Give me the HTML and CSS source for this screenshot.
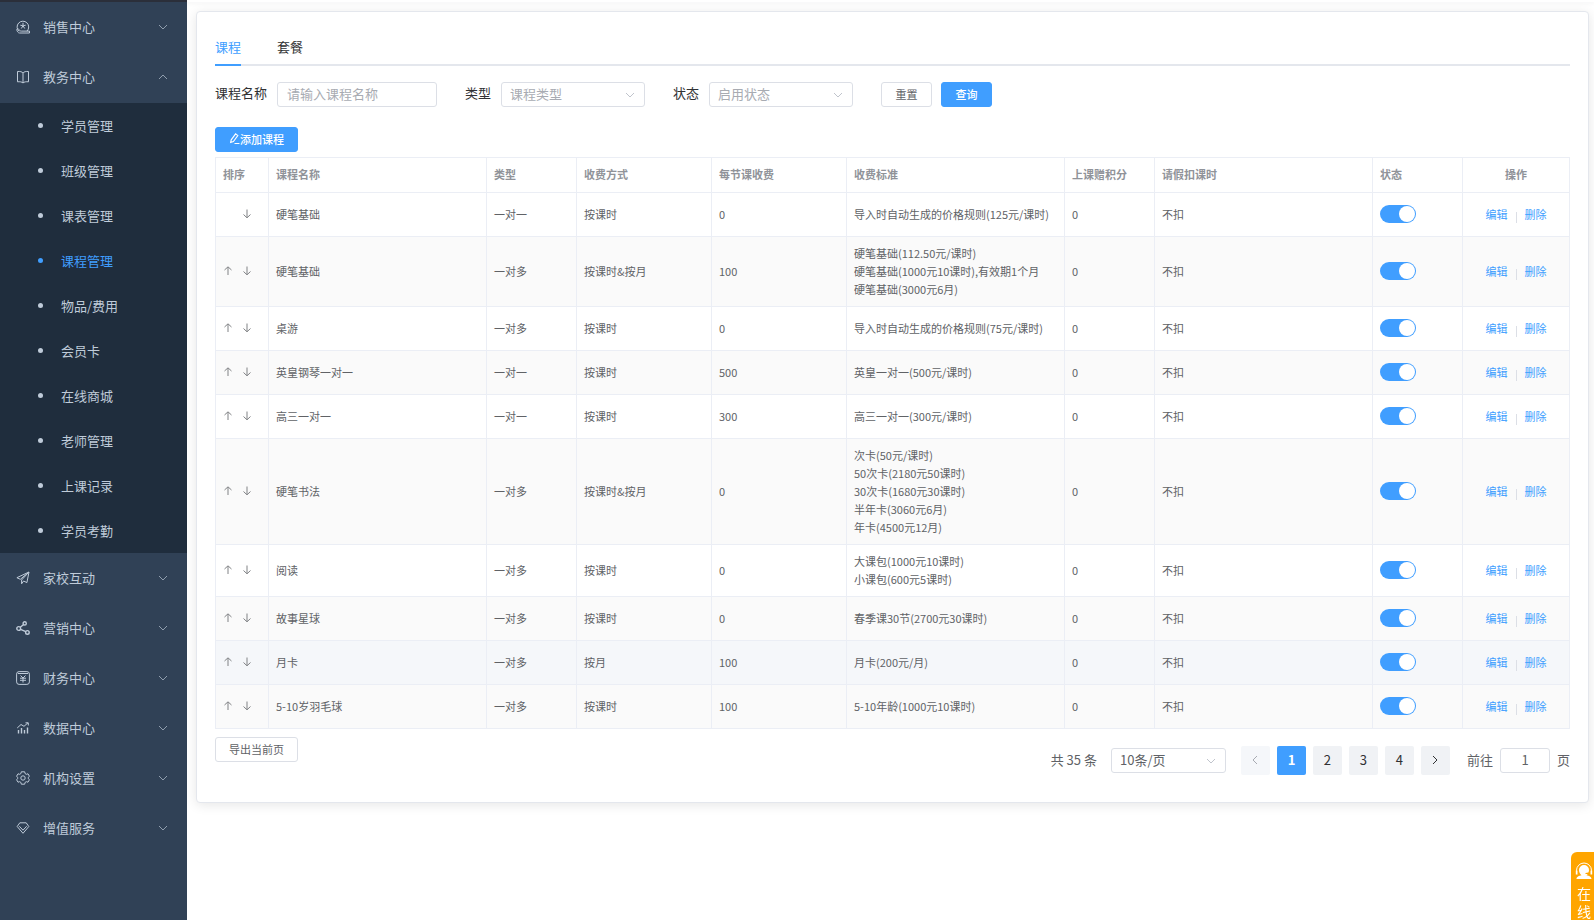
FILE: index.html
```html
<!DOCTYPE html>
<html lang="zh-CN">
<head>
<meta charset="utf-8">
<title>课程管理</title>
<link rel="stylesheet" href="styles.css">
</head>
<body>
<svg class="sprite" aria-hidden="true">
  <symbol id="i-down" viewBox="0 0 12 12"><path d="M2 4l4 4 4-4"/></symbol>
  <symbol id="i-up" viewBox="0 0 12 12"><path d="M2 8l4-4 4 4"/></symbol>
  <symbol id="i-arrow-up" viewBox="0 0 10 10"><path d="M5 9V1M1.500 4L5 .8 8.500 4"/></symbol>
  <symbol id="i-arrow-down" viewBox="0 0 10 10"><path d="M5 .5v8M1.500 5.500L5 8.800l3.500-3.300"/></symbol>
</svg>
<div class="app">
  <aside class="sidebar">
    <nav class="nav">
      <button class="nav-item" type="button">
        <svg class="nav-icon" viewBox="0 0 14 14"><path d="M3 11.300a5.800 5.800 0 1 1 8-.2"/><path d="M7 2.800v2.400M4.300 5.200l2.700.6 2.700-.6M5.300 8.500L7 5.800l1.700 2.700M.8 9.500c.2-1 1.500-1.200 2-.2s1.200 1.800 2.500 1.800h8.200v1.900H3.500c-1.500 0-2.700-2-2.700-3.500z"/></svg>
        <span>销售中心</span><svg class="nav-caret"><use href="#i-down"/></svg>
      </button>
      <button class="nav-item" type="button" aria-expanded="true">
        <svg class="nav-icon" viewBox="0 0 14 14"><path d="M7 3C6.200 1.800 4 1.200 1.500 1.500v10.300c2.300-.2 4.500 0 5.500 1.200 1-1.200 3.200-1.400 5.500-1.200V1.500C10 1.200 7.800 1.800 7 3zM7 3v10"/></svg>
        <span>教务中心</span><svg class="nav-caret"><use href="#i-up"/></svg>
      </button>
      <ul class="subnav">
        <li><a href="#">学员管理</a></li>
        <li><a href="#">班级管理</a></li>
        <li><a href="#">课表管理</a></li>
        <li><a href="#" class="is-active">课程管理</a></li>
        <li><a href="#">物品/费用</a></li>
        <li><a href="#">会员卡</a></li>
        <li><a href="#">在线商城</a></li>
        <li><a href="#">老师管理</a></li>
        <li><a href="#">上课记录</a></li>
        <li><a href="#">学员考勤</a></li>
      </ul>
      <button class="nav-item" type="button">
        <svg class="nav-icon" viewBox="0 0 14 14"><path d="M13 1L.9 6.700l3.400 1.600L13 1l-7.400 8v3.800l2-2.800 3.300 1.600L13 1z"/></svg>
        <span>家校互动</span><svg class="nav-caret"><use href="#i-down"/></svg>
      </button>
      <button class="nav-item" type="button">
        <svg class="nav-icon bold" viewBox="0 0 14 14"><circle cx="2.700" cy="7.500" r="1.900"/><circle cx="8.700" cy="2.400" r="1.600"/><circle cx="11.400" cy="11.400" r="1.800"/><path d="M4.300 6.300l3.300-2.800M4.600 8.300l5.200 2.400"/></svg>
        <span>营销中心</span><svg class="nav-caret"><use href="#i-down"/></svg>
      </button>
      <button class="nav-item" type="button">
        <svg class="nav-icon" viewBox="0 0 14 14"><rect x=".6" y=".6" width="12.800" height="12.800" rx="2.500"/><path d="M2 2.500h10M4.500 4.500L7 7l2.500-2.500M4 7.200h6M4 9.300h6M7 7v4.500"/></svg>
        <span>财务中心</span><svg class="nav-caret"><use href="#i-down"/></svg>
      </button>
      <button class="nav-item" type="button">
        <svg class="nav-icon" viewBox="0 0 14 14"><path class="bold" d="M2.500 12.500V9M5.500 12.500V7M8.500 12.500V9M11.500 12.500V6.500"/><path d="M1.200 7L5 3.500l3 1.800 4-3.500M9.500 1.800h2.800v2.700"/></svg>
        <span>数据中心</span><svg class="nav-caret"><use href="#i-down"/></svg>
      </button>
      <button class="nav-item" type="button">
        <svg class="nav-icon" viewBox="0 0 14 14"><circle cx="7" cy="7" r="2.200"/><path d="M5.300.8L8.700.8 9.100 2.600 10.300 3.300 12 2.800 13.400 5.200 12.400 6.300 12.400 7.700 13.400 8.800 12 11.200 10.300 10.700 9.100 11.400 8.700 13.200 5.300 13.200 4.900 11.400 3.700 10.700 2 11.200.6 8.800 1.600 7.700 1.600 6.300.6 5.200 2 2.800 3.700 3.300 4.900 2.600z"/></svg>
        <span>机构设置</span><svg class="nav-caret"><use href="#i-down"/></svg>
      </button>
      <button class="nav-item" type="button">
        <svg class="nav-icon" viewBox="0 0 14 14"><path d="M3.800 1.800h6.400L12.800 5.500 7 12.300 1.200 5.500zM3.300 5.200L7 9.200l3.700-4"/></svg>
        <span>增值服务</span><svg class="nav-caret"><use href="#i-down"/></svg>
      </button>
    </nav>
  </aside>

  <main class="main">
    <div class="topbar"></div>
    <section class="card">
      <div class="tabs" role="tablist">
        <button class="tab is-active" type="button" role="tab" aria-selected="true">课程</button>
        <button class="tab" type="button" role="tab" aria-selected="false">套餐</button>
      </div>

      <form class="filters">
        <div class="field"><label for="name">课程名称</label><input id="name" class="input name-input" type="text" placeholder="请输入课程名称"></div>
        <div class="field"><label for="type">类型</label>
          <span class="select"><select id="type" class="input is-empty"><option>课程类型</option></select><svg><use href="#i-down"/></svg></span></div>
        <div class="field"><label for="status">状态</label>
          <span class="select"><select id="status" class="input is-empty"><option>启用状态</option></select><svg><use href="#i-down"/></svg></span></div>
        <div class="actions"><button class="btn" type="reset">重置</button><button class="btn primary" type="button">查询</button></div>
      </form>

      <button class="btn primary add" type="button"><svg viewBox="0 0 10 10"><path d="M1.500 8.500L2 6.200 6 .8l2 1.500-4 5.400zM5 9.500h4.500"/></svg>添加课程</button>

      <table class="table">
        <colgroup><col class="w-sort"><col><col class="w-s"><col class="w-m"><col class="w-m"><col><col class="w-s"><col><col class="w-s"><col class="w-op"></colgroup>
        <thead><tr><th>排序</th><th>课程名称</th><th>类型</th><th>收费方式</th><th>每节课收费</th><th>收费标准</th><th>上课赠积分</th><th>请假扣课时</th><th>状态</th><th class="center">操作</th></tr></thead>
        <tbody id="rows"></tbody>
      </table>

      <div class="footer">
        <button class="btn export" type="button">导出当前页</button>
        <div class="pagination">
          <span class="total">共 35 条</span>
          <span class="select size"><select class="input" aria-label="每页条数"><option>10条/页</option></select><svg><use href="#i-down"/></svg></span>
          <div class="pager">
            <button class="page" type="button" disabled aria-label="上一页"><svg viewBox="0 0 12 12"><path d="M8 2L4 6l4 4"/></svg></button>
            <button class="page is-active" type="button">1</button>
            <button class="page" type="button">2</button>
            <button class="page" type="button">3</button>
            <button class="page" type="button">4</button>
            <button class="page" type="button" aria-label="下一页"><svg viewBox="0 0 12 12"><path d="M4 2l4 4-4 4"/></svg></button>
          </div>
          <div class="jump"><label for="jump">前往</label><input id="jump" class="input" type="text" value="1"><span>页</span></div>
        </div>
      </div>
    </section>
  </main>
</div>
<a class="service" href="#" aria-label="在线">
  <svg viewBox="0 0 18 18"><path class="line" d="M1.500 10.500V8.500a7.500 7.500 0 0 1 15 0v2"/><path d="M.8 8.500h1.700v4H.8zM15.500 8.500h1.700v4h-1.700zM9 3a5 5 0 0 1 5 5c0 1-.2 1.800-.6 2.600L10.500 11v1h2.300l-1.300 1.200c2.500.5 5 1.300 5 3.800h-15c0-2.500 2.500-3.300 5-3.800C5 12.200 4 10 4 8a5 5 0 0 1 5-5z"/></svg>
  <span>在</span><span>线</span>
</a>
<script src="app.js"></script>
</body>
</html>
```
FILE: app.js
```js
const courses = [
  ['硬笔基础', '一对一', '按课时', '0', ['导入时自动生成的价格规则(125元/课时)']],
  ['硬笔基础', '一对多', '按课时&按月', '100', ['硬笔基础(112.50元/课时)', '硬笔基础(1000元10课时),有效期1个月', '硬笔基础(3000元6月)']],
  ['桌游', '一对多', '按课时', '0', ['导入时自动生成的价格规则(75元/课时)']],
  ['英皇钢琴一对一', '一对一', '按课时', '500', ['英皇一对一(500元/课时)']],
  ['高三一对一', '一对一', '按课时', '300', ['高三一对一(300元/课时)']],
  ['硬笔书法', '一对多', '按课时&按月', '0', ['次卡(50元/课时)', '50次卡(2180元50课时)', '30次卡(1680元30课时)', '半年卡(3060元6月)', '年卡(4500元12月)']],
  ['阅读', '一对多', '按课时', '0', ['大课包(1000元10课时)', '小课包(600元5课时)']],
  ['故事星球', '一对多', '按课时', '0', ['春季课30节(2700元30课时)']],
  ['月卡', '一对多', '按月', '100', ['月卡(200元/月)']],
  ['5-10岁羽毛球', '一对多', '按课时', '100', ['5-10年龄(1000元10课时)']]
];
const hovered = 8;

const esc = (s) => s.replace(/&/g, '&amp;');
const arrow = (dir, label) =>
  `<button type="button" aria-label="${label}"><svg><use href="#i-arrow-${dir}"/></svg></button>`;

document.getElementById('rows').innerHTML = courses.map(([name, type, mode, fee, rules], i) => `
  <tr${i === hovered ? ' class="is-hover"' : ''}>
    <td><div class="sort">${i ? arrow('up', '上移') : ''}${arrow('down', '下移')}</div></td>
    <td>${name}</td><td>${type}</td><td>${esc(mode)}</td><td>${fee}</td>
    <td>${rules.map((r) => `<div>${r}</div>`).join('')}</td>
    <td>0</td><td>不扣</td>
    <td><input class="switch" type="checkbox" role="switch" aria-label="${name}状态" checked></td>
    <td><div class="ops"><a href="#">编辑</a><i></i><a href="#">删除</a></div></td>
  </tr>`).join('');
```
FILE: styles.css
```css
* { box-sizing: border-box; }
body {
  margin: 0;
  background: #fff;
  color: #303133;
  font: 13px/18px "Noto Sans CJK SC", sans-serif;
}
button, input, select { font: inherit; color: inherit; margin: 0; }
button { cursor: pointer; }
a { text-decoration: none; color: #409eff; }
svg { fill: none; stroke: currentColor; }
.sprite { position: absolute; width: 0; height: 0; }

.app { display: flex; min-height: 100vh; }

/* sidebar */
.sidebar {
  flex: none;
  width: 187px;
  background: #304156;
  border-top: 2px solid #2b2f3a;
}
.nav-item {
  display: flex;
  align-items: center;
  width: 100%;
  height: 50px;
  padding: 0 18px 0 16px;
  border: 0;
  background: none;
  color: #bfcbd9;
  text-align: left;
}
.nav-item span { flex: 1; }
.nav-icon { width: 14px; height: 14px; margin-right: 13px; }
.nav-icon.bold, .nav-icon .bold { stroke-width: 1.4; }
.nav-caret { width: 12px; height: 12px; color: #909eae; }
.subnav {
  margin: 1px 0 0;
  padding: 0;
  list-style: none;
  background: #1f2d3d;
}
.subnav a {
  display: flex;
  align-items: center;
  gap: 18px;
  height: 45px;
  padding-left: 38px;
  color: #bfcbd9;
}
.subnav a::before {
  content: "";
  width: 5px;
  height: 5px;
  border-radius: 50%;
  background: currentColor;
}
.subnav a.is-active { color: #409eff; }

/* content card */
.main { flex: 1; min-width: 0; }
.topbar { height: 2px; box-shadow: 0 1px 4px rgba(0, 21, 41, .08); }
.card {
  margin: 9px 5px 0 9px;
  padding: 27px 18px 27px;
  border: 1px solid #e4e7ed;
  border-radius: 4px;
  background: #fff;
  box-shadow: 0 2px 12px rgba(0, 0, 0, .1);
}
.tabs { display: flex; gap: 36px; border-bottom: 2px solid #e4e7ed; }
.tab {
  height: 27px;
  margin-bottom: -2px;
  padding: 0 0 9px;
  border: 0;
  border-bottom: 2px solid transparent;
  background: none;
  line-height: 16px;
}
.tab.is-active { color: #409eff; border-color: #409eff; }

.filters { display: flex; gap: 28px; margin: 16px 0 20px; }
.field { display: flex; align-items: center; gap: 10px; }
.field label { padding-bottom: 3px; }
.input {
  height: 25px;
  padding: 0 9px 2px;
  border: 1px solid #dcdfe6;
  border-radius: 3px;
  background: #fff;
  color: #606266;
  outline: 0;
}
.input::placeholder { color: #a8abb2; }
.name-input { width: 160px; }
.select { display: flex; align-items: center; position: relative; width: 144px; }
.select select { width: 100%; appearance: none; padding: 0 8px 2px; }
.select .is-empty { color: #a8abb2; }
.select svg {
  position: absolute;
  right: 9px;
  width: 12px;
  height: 12px;
  color: #c0c4cc;
  pointer-events: none;
}
.actions { display: flex; gap: 9px; }
.btn {
  min-width: 51px;
  height: 25px;
  padding: 0 13px 2px;
  border: 1px solid #dcdfe6;
  border-radius: 3px;
  background: #fff;
  color: #606266;
  font-size: 11px;
  line-height: 16px;
}
.btn.primary { background: #409eff; border-color: #409eff; color: #fff; font-weight: 500; }
.add { display: flex; align-items: center; margin-bottom: 5px; }
.add svg { width: 11px; height: 11px; }

/* table */
.table {
  width: 100%;
  table-layout: fixed;
  border-collapse: separate;
  border-spacing: 0;
  border: solid #ebeef5;
  border-width: 1px 0 0 1px;
  color: #606266;
  font-size: 11px;
}
.w-sort { width: 53px; }
.w-s { width: 90px; }
.w-m { width: 135px; }
.w-op { width: 107px; }
.table th, .table td {
  border: solid #ebeef5;
  border-width: 0 1px 1px 0;
  text-align: left;
}
.table th { height: 35px; padding: 6px 7px 8px; color: #909399; font-weight: 700; }
.table td { height: 44px; padding: 7px 0 8px 7px; }
.table th.center { text-align: center; }
.table tbody tr:nth-child(even), .table tbody tr:last-child { background: #fafafa; }
.table tbody tr.is-hover { background: #f5f7fa; }
.sort { display: flex; justify-content: flex-end; gap: 9px; padding-right: 16px; }
.sort button {
  display: flex;
  padding: 0;
  border: 0;
  background: none;
  color: #808285;
}
.sort svg { width: 10px; height: 10px; }
.switch {
  display: flex;
  justify-content: flex-end;
  appearance: none;
  width: 36px;
  height: 18px;
  padding: 1px;
  border-radius: 9px;
  background: #409eff;
}
.switch::after {
  content: "";
  width: 16px;
  height: 16px;
  border-radius: 50%;
  background: #fff;
}
.ops { display: flex; justify-content: center; padding-right: 7px; }
.ops i { align-self: flex-end; width: 1px; height: 11px; margin: 0 8px; background: #dcdfe6; }

/* footer */
.footer { display: flex; align-items: flex-start; justify-content: space-between; margin-top: 8px; }
.pagination { display: flex; align-items: center; margin-top: 9px; color: #606266; }
.total, .jump span, .jump label { padding-bottom: 1px; }
.size { width: 115px; margin: 0 15px 0 14px; }
.pager { display: flex; gap: 7px; }
.page {
  display: grid;
  place-items: center;
  width: 29px;
  height: 29px;
  padding: 0 0 1px;
  border: 0;
  border-radius: 2px;
  background: #f0f2f5;
  color: #303133;
}
.page:disabled { background: #f5f7fa; color: #a8abb2; }
.page.is-active { background: #409eff; color: #fff; font-weight: 700; }
.page svg { width: 12px; height: 12px; }
.jump { display: flex; align-items: center; gap: 7px; margin-left: 17px; }
.jump .input { width: 50px; text-align: center; }

/* floating service tab */
.service {
  position: fixed;
  right: 0;
  bottom: 0;
  display: flex;
  flex-direction: column;
  align-items: center;
  width: 23px;
  padding-top: 10px;
  padding-left: 3px;
  border-radius: 6px 0 0 0;
  background: #ffa500;
  color: #fff;
  font-size: 14px;
  line-height: 18px;
}
.service svg { width: 18px; height: 18px; margin-bottom: 4px; fill: #fff; stroke: none; }
.service .line { fill: none; stroke: #fff; stroke-width: 1; }
```
